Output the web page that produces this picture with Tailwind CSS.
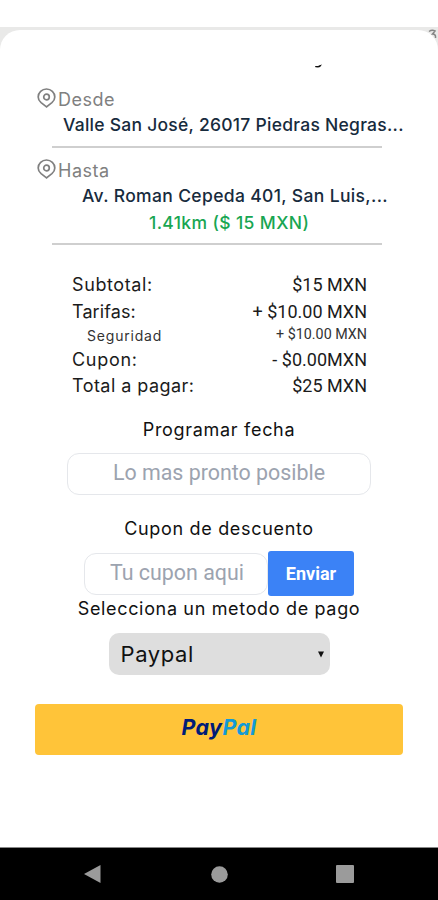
<!DOCTYPE html>
<html lang="es">
<head>
<meta charset="utf-8">
<title>Resumen del viaje</title>
<script src="https://cdn.jsdelivr.net/npm/@tailwindcss/browser@4"></script>
</head>
<body class="h-[900px] w-[438px] overflow-hidden bg-white font-[Inter,sans-serif]">
<div class="flex h-[900px] flex-col">
  <div class="h-[27px] shrink-0 bg-white"></div>
  <div class="relative h-[821px] shrink-0 bg-[#e9e9e8] pt-[3px]">
    <svg class="absolute right-0 top-[2px]" width="10" height="12" viewBox="0 0 10 12" fill="none" stroke="#858585" stroke-width="1.5"><path d="M1 2.5Q4 .5 7 2L4.500 5Q8 5 7.500 9"/></svg>
    <main class="relative flex h-[818px] flex-col rounded-t-[20px] border-b border-[#888] bg-white pt-[57px]">
      <svg class="absolute left-[315px] top-[34px]" width="8" height="5" viewBox="0 0 8 5"><path d="M0 2Q3 2.300 4.500 1.200L7 .5Q5.500 3.600 3 3.600L.5 3.200Z" fill="#111"/></svg>

      <section class="flex flex-col">
        <div class="flex h-[22px] items-center pl-[37px] text-[#808080]">
          <svg class="shrink-0" width="19" height="20" viewBox="0 0 19 20" fill="none" stroke="currentColor" stroke-width="1.700"><path d="M9.500 18.800L4.100 14.600Q1.200 12.200 1.200 8.900A8.300 7.900 0 0 1 17.800 8.900Q17.800 12.200 14.900 14.600Z"/><circle cx="9.500" cy="9" r="2.800"/></svg>
          <span class="ml-[2px] mt-[2px] text-[18px] tracking-[0.5px]">Desde</span>
        </div>
        <p class="h-[37px] whitespace-nowrap pl-[63px] text-[17.5px] font-medium leading-[32px] tracking-[0.26px] text-[#172b3d]">Valle San José, 26017 Piedras Negras...</p>
        <hr class="ml-[52px] h-[2px] w-[330px] border-0 bg-[#cfcfcf]">
        <div class="mt-[10px] flex h-[22px] items-center pl-[37px] text-[#808080]">
          <svg class="shrink-0" width="19" height="20" viewBox="0 0 19 20" fill="none" stroke="currentColor" stroke-width="1.700"><path d="M9.500 18.800L4.100 14.600Q1.200 12.200 1.200 8.900A8.300 7.900 0 0 1 17.800 8.900Q17.800 12.200 14.900 14.600Z"/><circle cx="9.500" cy="9" r="2.800"/></svg>
          <span class="ml-[2px] mt-[2px] text-[18px] tracking-[0.5px]">Hasta</span>
        </div>
        <p class="h-[29px] whitespace-nowrap pl-[82px] text-[17.5px] font-medium leading-[32px] tracking-[0.35px] text-[#172b3d]">Av. Roman Cepeda 401, San Luis,...</p>
        <p class="h-[34px] whitespace-nowrap pl-[149px] text-[17.5px] font-medium leading-[27px] tracking-[0.37px] text-[#18a652]">1.41km ($ 15 MXN)</p>
        <hr class="ml-[52px] h-[2px] w-[330px] border-0 bg-[#cfcfcf]">
      </section>

      <dl class="mt-[26px] flex w-[367px] flex-col pl-[72px] text-[18px] text-[#1b1b1b]">
        <div class="flex h-[27px] items-center justify-between"><dt class="tracking-[0.6px]">Subtotal:</dt><dd class="font-[Roboto] text-[18px]">$15 MXN</dd></div>
        <div class="flex h-[26px] items-center justify-between"><dt class="tracking-[0.1px]">Tarifas:</dt><dd class="font-[Roboto] text-[18px]">+ $10.00 MXN</dd></div>
        <div class="flex h-[22px] items-center justify-between pl-[15px] text-[14px] text-[#333]"><dt class="tracking-[0.8px]">Seguridad</dt><dd class="font-[Roboto] text-[14.3px]">+ $10.00 MXN</dd></div>
        <div class="flex h-[26px] items-center justify-between"><dt class="tracking-[0.7px]">Cupon:</dt><dd class="font-[Roboto] text-[18px]">- $0.00MXN</dd></div>
        <div class="flex h-[27px] items-center justify-between"><dt class="tracking-[0.45px]">Total a pagar:</dt><dd class="font-[Roboto] text-[18px]">$25 MXN</dd></div>
      </dl>

      <section class="flex flex-col items-center text-[18px] text-[#111]">
        <h2 class="mt-[19px] h-[35px] leading-[24px] tracking-[0.7px]">Programar fecha</h2>
        <div class="flex h-[42px] w-[304px] items-center justify-center rounded-[12px] border border-[#e5e7eb] pb-px font-[Roboto] text-[21.4px] text-[#9ca3af]">Lo mas pronto posible</div>
        <h2 class="mt-[22px] h-[34px] leading-[24px] tracking-[0.68px]">Cupon de descuento</h2>
        <div class="flex h-[45px] items-center">
          <div class="flex h-[42px] w-[184px] items-center justify-center rounded-[12px] border border-[#e5e7eb] pl-[2px] font-[Roboto] text-[21.4px] text-[#9ca3af]">Tu cupon aqui</div>
          <button class="h-[45px] w-[86px] rounded-[3px] bg-[#3b82f6] font-[Roboto] text-[18px] font-bold text-white">Enviar</button>
        </div>
        <h2 class="h-[37px] leading-[26px] tracking-[0.66px]">Selecciona un metodo de pago</h2>
        <div class="flex h-[42px] w-[221px] items-center justify-between rounded-[10px] bg-[#dedede] pl-[12px] pr-[6px] text-[22px]">
          <span class="tracking-[0.6px]">Paypal</span>
          <svg width="6" height="7" viewBox="0 0 6 7"><path d="M0 .5h6L3 6.500Z" fill="#111"/></svg>
        </div>
        <button class="mt-[29px] flex h-[51px] w-[368px] items-center justify-center rounded-[4px] bg-[#ffc439] pb-[3px] font-[Inter] text-[21.5px] font-bold italic leading-none tracking-[0.3px] text-[#001c77]"><span>Pay<span class="text-[#139ad6]">Pal</span></span></button>
      </section>
    </main>
  </div>
  <nav class="relative flex h-[52px] shrink-0 items-center bg-black pl-[84px] text-[#9b9b9b]">
    <svg width="17" height="18" viewBox="0 0 17 18" fill="currentColor"><path d="M0 9L16.500 0V18Z"/></svg>
    <svg class="ml-[110px]" width="17" height="17" viewBox="0 0 17 17" fill="currentColor"><circle cx="8.500" cy="8.500" r="8.300"/></svg>
    <span class="ml-[108px] h-[18px] w-[18px] rounded-[1px] bg-[#9b9b9b]"></span>
  </nav>
</div>
</body>
</html>
